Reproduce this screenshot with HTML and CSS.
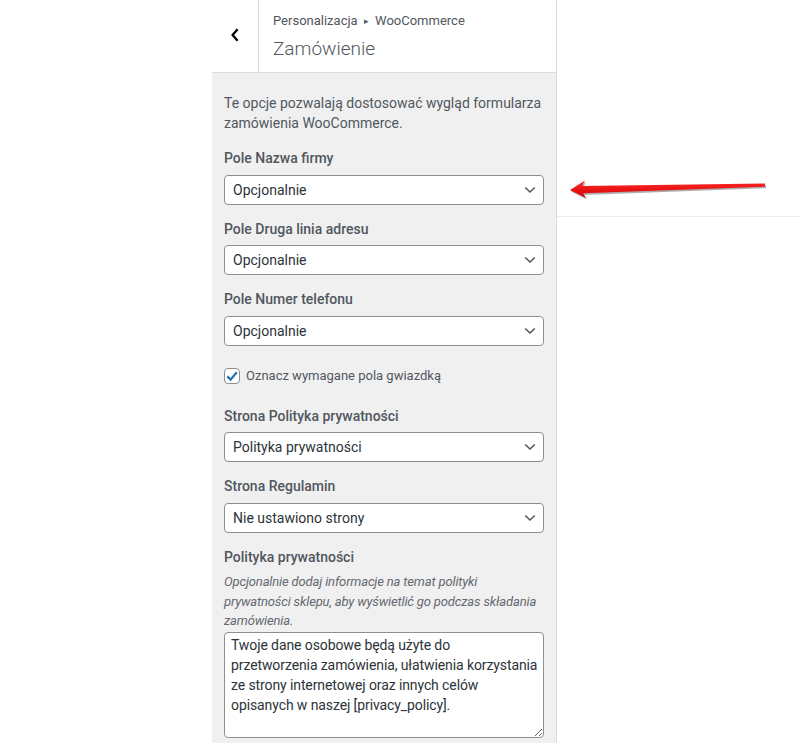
FILE: index.html
```html
<!DOCTYPE html>
<html lang="pl">
<head>
<meta charset="utf-8">
<title>Zamówienie</title>
<link rel="stylesheet" href="styles.css">
</head>
<body>
<div class="layout">
  <div class="gutter"></div>
  <aside class="panel">
    <header class="section-head">
      <button class="back" type="button" aria-label="Wróć">
        <svg width="10" height="16" viewBox="0 0 10 16"><path d="M7.6 2.2 L2.6 8 L7.6 13.8" fill="none" stroke="#000" stroke-width="2.3" stroke-linejoin="miter"/></svg>
      </button>
      <div class="section-title">
        <div class="crumbs">Personalizacja <span class="tri">▸</span> WooCommerce</div>
        <h3 class="heading">Zamówienie</h3>
      </div>
    </header>
    <div class="section-body">
      <p class="intro">Te opcje pozwalają dostosować wygląd formularza zamówienia WooCommerce.</p>

      <div class="control">
        <label class="title">Pole Nazwa firmy</label>
        <div class="select-wrap">
          <select class="select"><option>Opcjonalnie</option></select>
          <svg class="chev" width="12" height="8" viewBox="0 0 12 8"><path d="M1.2 1.5 L6 6 L10.8 1.5" fill="none" stroke="#50575e" stroke-width="1.6"/></svg>
        </div>
      </div>

      <div class="control">
        <label class="title">Pole Druga linia adresu</label>
        <div class="select-wrap">
          <select class="select"><option>Opcjonalnie</option></select>
          <svg class="chev" width="12" height="8" viewBox="0 0 12 8"><path d="M1.2 1.5 L6 6 L10.8 1.5" fill="none" stroke="#50575e" stroke-width="1.6"/></svg>
        </div>
      </div>

      <div class="control">
        <label class="title">Pole Numer telefonu</label>
        <div class="select-wrap">
          <select class="select"><option>Opcjonalnie</option></select>
          <svg class="chev" width="12" height="8" viewBox="0 0 12 8"><path d="M1.2 1.5 L6 6 L10.8 1.5" fill="none" stroke="#50575e" stroke-width="1.6"/></svg>
        </div>
      </div>

      <div class="control check">
        <span class="box"><svg width="14" height="14" viewBox="0 0 14 14"><path d="M2.3 7.4 L5.6 10.6 L11.8 3.2" fill="none" stroke="#2271b1" stroke-width="2.2"/></svg></span>
        <span class="check-label">Oznacz wymagane pola gwiazdką</span>
      </div>

      <div class="control">
        <label class="title">Strona Polityka prywatności</label>
        <div class="select-wrap">
          <select class="select"><option>Polityka prywatności</option></select>
          <svg class="chev" width="12" height="8" viewBox="0 0 12 8"><path d="M1.2 1.5 L6 6 L10.8 1.5" fill="none" stroke="#50575e" stroke-width="1.6"/></svg>
        </div>
      </div>

      <div class="control">
        <label class="title">Strona Regulamin</label>
        <div class="select-wrap">
          <select class="select"><option>Nie ustawiono strony</option></select>
          <svg class="chev" width="12" height="8" viewBox="0 0 12 8"><path d="M1.2 1.5 L6 6 L10.8 1.5" fill="none" stroke="#50575e" stroke-width="1.6"/></svg>
        </div>
      </div>

      <div class="control">
        <label class="title">Polityka prywatności</label>
        <p class="note">Opcjonalnie dodaj informacje na temat polityki prywatności sklepu, aby wyświetlić go podczas składania zamówienia.</p>
        <textarea class="textarea">Twoje dane osobowe będą użyte do
przetworzenia zamówienia, ułatwienia korzystania
ze strony internetowej oraz innych celów
opisanych w naszej [privacy_policy].</textarea>
      </div>
    </div>
  </aside>
  <main class="preview">
    <div class="preview-bar"></div>
  </main>
  <svg class="pointer" width="215" height="36" viewBox="0 0 215 36">
    <defs>
      <linearGradient id="red" x1="0" y1="0" x2="0" y2="1">
        <stop offset="0" stop-color="#ff2a2a"/>
        <stop offset="1" stop-color="#d40000"/>
      </linearGradient>
    </defs>
    <polygon points="11,21.5 26,12 23,17.8 206,15.2 206,18.2 24,25 27,29.5" fill="#6a6a6a" opacity="0.55"/>
    <polygon points="10,20 25,10.5 22,16 205,13.4 205,16.6 23,23.2 26,28" fill="url(#red)"/>
  </svg>
</div>
</body>
</html>
```

FILE: styles.css
```css
* { box-sizing: border-box; }

html, body {
  margin: 0;
  padding: 0;
  background: #fff;
}

body {
  font-family: Roboto, "Noto Sans", "Liberation Sans", sans-serif;
  color: #50575e;
}

.layout {
  position: relative;
  display: flex;
  height: 743px;
  overflow: hidden;
}

.gutter {
  flex: none;
  width: 212px;
  background: #fff;
}

.panel {
  flex: none;
  width: 345px;
  background: #f0f0f1;
  border-right: 1px solid #dcdcde;
  display: flex;
  flex-direction: column;
}

.preview {
  flex: 1;
  background: #fff;
}

.preview-bar {
  height: 217px;
  border-bottom: 1px solid #ededed;
}

/* header */
.section-head {
  flex: none;
  display: flex;
  height: 73px;
  background: #fff;
  border-bottom: 1px solid #dcdcde;
}

.back {
  flex: none;
  width: 47px;
  padding: 0 0 3px;
  margin: 0;
  border: 0;
  border-right: 1px solid #dcdcde;
  background: #fff;
  display: flex;
  align-items: center;
  justify-content: center;
}

.section-title {
  padding: 11px 0 0 14px;
}

.crumbs {
  font-size: 13px;
  line-height: 19px;
  color: #50575e;
}

.tri {
  font-size: 9px;
  position: relative;
  top: -1px;
  margin: 0 3px;
}

.heading {
  margin: 3px 0 0;
  font-size: 19px;
  line-height: 27px;
  font-weight: 300;
  color: #50575e;
}

/* body */
.section-body {
  flex: none;
  padding: 21px 12px 0;
}

.intro {
  margin: 0 0 13px;
  font-size: 14px;
  line-height: 19.5px;
  color: #50575e;
}

.control {
  margin-bottom: 12px;
}

.title {
  display: block;
  font-size: 14px;
  line-height: 24.5px;
  font-weight: 500;
  color: #50575e;
  margin-bottom: 4px;
}

.select-wrap {
  position: relative;
}

.select {
  display: block;
  width: 100%;
  height: 30px;
  margin: 0;
  padding: 0 24px 0 8px;
  border: 1px solid #8c8f94;
  border-radius: 4px;
  background: #fff;
  font-family: inherit;
  font-size: 14px;
  color: #2c3338;
  -webkit-appearance: none;
  appearance: none;
}

.chev {
  position: absolute;
  right: 8px;
  top: 11px;
  pointer-events: none;
}

.control.check {
  display: flex;
  align-items: center;
  gap: 6px;
  height: 28px;
  padding-top: 8px;
  margin: 0 0 18px;
}

.box {
  flex: none;
  width: 16px;
  height: 16px;
  border: 1px solid #8c8f94;
  border-radius: 4px;
  background: #fff;
  display: flex;
  align-items: center;
  justify-content: center;
}

.check-label {
  font-size: 13px;
  line-height: 20px;
  color: #50575e;
}

.note {
  margin: -1px 0 1px;
  font-size: 13px;
  line-height: 19.5px;
  font-style: italic;
  letter-spacing: -0.15px;
  color: #646970;
}

.textarea {
  display: block;
  width: 100%;
  height: 106px;
  margin: 0;
  padding: 2px 6px;
  border: 1px solid #8c8f94;
  border-radius: 4px;
  background: #fff;
  font-family: inherit;
  font-size: 14px;
  line-height: 20px;
  letter-spacing: -0.1px;
  color: #2c3338;
  white-space: pre;
  overflow: hidden;
  resize: vertical;
}

/* annotation arrow laid over the preview */
.pointer {
  position: absolute;
  left: 560px;
  top: 170px;
}
```
